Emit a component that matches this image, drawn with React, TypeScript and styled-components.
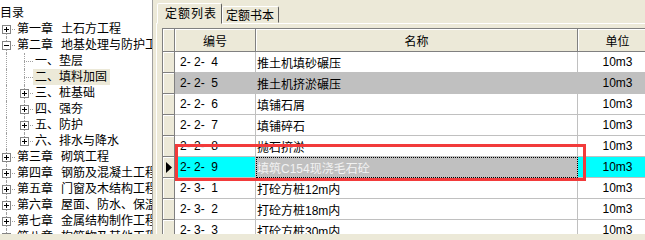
import React from 'react';
import styled, { createGlobalStyle } from 'styled-components';

const FONT = `"Liberation Sans", "Noto Sans CJK SC", sans-serif`;
const FACE = '#ece9d8';

const GlobalStyle = createGlobalStyle`
  *, *::before, *::after { box-sizing: border-box; }
  html, body { margin: 0; padding: 0; background: ${FACE}; }
  body { font-family: ${FONT}; font-size: 12px; color: #000; overflow: hidden; }
`;

const Window = styled.div`
  position: relative;
  display: flex;
  width: 645px;
  height: 234px;
  overflow: hidden;
  font-family: ${FONT};
  font-size: 12px;
`;

/* ---------------- tree ---------------- */

const TreePane = styled.div`
  flex: none;
  width: 153px;
  height: 100%;
  background: #fff;
  border-right: 1px solid #a0a0a0;
  overflow: hidden;
  padding-top: 5px;
`;

const TreeRow = styled.div`
  display: flex;
  height: 16px;
  white-space: nowrap;
`;

type Vert = 'full' | 'top' | 'bottom' | 'none';

const Connector = styled.span<{ $w: number; $x: number; $vert: Vert; $horiz: boolean }>`
  position: relative;
  flex: none;
  width: ${p => p.$w}px;
  height: 16px;
  &::before {
    content: '';
    position: absolute;
    display: ${p => (p.$vert === 'none' ? 'none' : 'block')};
    left: ${p => p.$x}px;
    top: ${p => (p.$vert === 'bottom' ? 8 : 0)}px;
    bottom: ${p => (p.$vert === 'top' ? 8 : 0)}px;
    border-left: 1px dotted #a0a0a0;
  }
  &::after {
    content: '';
    position: absolute;
    display: ${p => (p.$horiz ? 'block' : 'none')};
    left: ${p => p.$x}px;
    right: 0;
    top: 8px;
    border-top: 1px dotted #a0a0a0;
  }
`;

const ExpandBox = styled.svg<{ $x: number }>`
  position: absolute;
  left: ${p => p.$x - 4}px;
  top: 4px;
  z-index: 1;
`;

const TreeLabel = styled.span<{ $hl?: boolean; $root?: boolean }>`
  display: inline-block;
  height: 16px;
  line-height: 16px;
  padding: ${p => (p.$root ? '0' : '0 3px 0 2px')};
  background: ${p => (p.$hl ? FACE : 'transparent')};
`;

const ChapterTitle = styled.span`
  margin-left: 8px;
`;

type Box = 'plus' | 'minus' | undefined;

const BoxIcon: React.FC<{ kind: 'plus' | 'minus'; x: number }> = ({ kind, x }) => (
  <ExpandBox $x={x} width="9" height="9" viewBox="0 0 9 9">
    <rect x="0.5" y="0.5" width="8" height="8" fill="#fff" stroke="#848484" />
    <path d="M2 4.5h5" stroke="#000" strokeWidth="1" />
    {kind === 'plus' && <path d="M4.5 2v5" stroke="#000" strokeWidth="1" />}
  </ExpandBox>
);

type TreeItem =
  | { kind: 'root'; label: string }
  | { kind: 'chapter'; prefix: string; title: string; box: Box; vert: Vert }
  | { kind: 'child'; label: string; box: Box; vert: Vert; hl?: boolean };

const tree: TreeItem[] = [
  { kind: 'root', label: '目录' },
  { kind: 'chapter', prefix: '第一章', title: '土石方工程', box: 'plus', vert: 'bottom' },
  { kind: 'chapter', prefix: '第二章', title: '地基处理与防护工程', box: 'minus', vert: 'full' },
  { kind: 'child', label: '一、垫层', box: undefined, vert: 'full' },
  { kind: 'child', label: '二、填料加固', box: undefined, vert: 'full', hl: true },
  { kind: 'child', label: '三、桩基础', box: 'plus', vert: 'full' },
  { kind: 'child', label: '四、强夯', box: 'plus', vert: 'full' },
  { kind: 'child', label: '五、防护', box: 'plus', vert: 'full' },
  { kind: 'child', label: '六、排水与降水', box: 'plus', vert: 'top' },
  { kind: 'chapter', prefix: '第三章', title: '砌筑工程', box: 'plus', vert: 'full' },
  { kind: 'chapter', prefix: '第四章', title: '钢筋及混凝土工程', box: 'plus', vert: 'full' },
  { kind: 'chapter', prefix: '第五章', title: '门窗及木结构工程', box: 'plus', vert: 'full' },
  { kind: 'chapter', prefix: '第六章', title: '屋面、防水、保温及隔热工程', box: 'plus', vert: 'full' },
  { kind: 'chapter', prefix: '第七章', title: '金属结构制作工程', box: 'plus', vert: 'full' },
  { kind: 'chapter', prefix: '第八章', title: '构筑物及其他工程', box: 'plus', vert: 'full' },
];

const Tree: React.FC = () => (
  <TreePane>
    {tree.map((it, i) => {
      if (it.kind === 'root') {
        return (
          <TreeRow key={i}>
            <TreeLabel $root>{it.label}</TreeLabel>
          </TreeRow>
        );
      }
      if (it.kind === 'chapter') {
        return (
          <TreeRow key={i}>
            <Connector $w={15} $x={6} $vert={it.vert} $horiz>
              {it.box && <BoxIcon kind={it.box} x={6} />}
            </Connector>
            <TreeLabel>
              {it.prefix}
              <ChapterTitle>{it.title}</ChapterTitle>
            </TreeLabel>
          </TreeRow>
        );
      }
      return (
        <TreeRow key={i}>
          <Connector $w={15} $x={6} $vert="full" $horiz={false} />
          <Connector $w={18} $x={9} $vert={it.vert} $horiz>
            {it.box && <BoxIcon kind={it.box} x={9} />}
          </Connector>
          <TreeLabel $hl={it.hl}>{it.label}</TreeLabel>
        </TreeRow>
      );
    })}
  </TreePane>
);

/* ---------------- right side ---------------- */

const RightPane = styled.div`
  flex: 1;
  min-width: 0;
  display: flex;
  flex-direction: column;
  padding: 3px 0 0 3px;
  background: ${FACE};
  overflow: hidden;
`;

const TabBar = styled.div`
  display: flex;
  align-items: flex-end;
  height: 20px;
  padding-left: 1px;
`;

const Tab = styled.div<{ $active?: boolean }>`
  position: relative;
  z-index: ${p => (p.$active ? 1 : 0)};
  height: ${p => (p.$active ? 21 : 17)}px;
  margin-bottom: ${p => (p.$active ? -1 : 0)}px;
  width: ${p => (p.$active ? 65 : 57)}px;
  padding: ${p => (p.$active ? '2px 0 0 7px' : '1px 0 0 3px')};
  line-height: 16px;
  letter-spacing: ${p => (p.$active ? '1px' : '0')};
  background: ${FACE};
  border: 1px solid;
  border-color: #fff #606060 transparent #fff;
  border-radius: 2px 2px 0 0;
  white-space: nowrap;
`;

const TabPanel = styled.div`
  flex: 1;
  border-top: 1px solid #fff;
  border-left: 1px solid #fff;
  padding: 4px 0 0 5px;
  overflow: hidden;
`;

const Grid = styled.div`
  width: max-content;
  border-top: 1px solid #808080;
  border-left: 1px solid #808080;
`;

const HeaderRow = styled.div`
  display: flex;
  height: 23px;
`;

const HeaderCell = styled.div<{ $w: number }>`
  flex: none;
  width: ${p => p.$w}px;
  display: flex;
  align-items: center;
  justify-content: center;
  background: ${FACE};
  border-right: 1px solid #808080;
  border-bottom: 1px solid #808080;
  box-shadow: inset 1px 1px 0 #fff;
`;

const DataRow = styled.div`
  display: flex;
  height: 21px;
`;

const Indicator = styled.div`
  flex: none;
  width: 12px;
  display: flex;
  align-items: center;
  justify-content: center;
  background: ${FACE};
  border-right: 1px solid #808080;
  border-bottom: 1px solid #808080;
  box-shadow: inset 1px 1px 0 #fff;
`;

type CellTone = 'normal' | 'selected' | 'current' | 'focus';

const toneBg: Record<CellTone, string> = {
  normal: '#ffffff',
  selected: '#c0c0c0',
  current: '#00ffff',
  focus: '#c0c0c0',
};

const DataCell = styled.div<{ $w: number; $tone: CellTone; $align: 'left' | 'center'; $pad: number }>`
  flex: none;
  width: ${p => p.$w}px;
  display: flex;
  align-items: center;
  justify-content: ${p => (p.$align === 'center' ? 'center' : 'flex-start')};
  padding-left: ${p => p.$pad}px;
  white-space: pre;
  overflow: hidden;
  background: ${p => toneBg[p.$tone]};
  color: ${p => (p.$tone === 'focus' ? '#f2f2f2' : '#000')};
  border-right: 1px solid #c0c0c0;
  border-bottom: 1px solid #c0c0c0;
  outline: ${p => (p.$tone === 'focus' ? '1px dotted #000' : 'none')};
  outline-offset: -1px;
`;

const RedMark = styled.div`
  position: absolute;
  left: 175px;
  top: 144px;
  width: 411px;
  height: 37px;
  border: 3px solid #f23b3b;
  pointer-events: none;
  z-index: 5;
`;

type RowState = 'normal' | 'selected' | 'current';

const rows: { code: string; name: string; unit: string; state: RowState }[] = [
  { code: '2- 2-  4', name: '推土机填砂碾压', unit: '10m3', state: 'normal' },
  { code: '2- 2-  5', name: '推土机挤淤碾压', unit: '10m3', state: 'selected' },
  { code: '2- 2-  6', name: '填铺石屑', unit: '10m3', state: 'normal' },
  { code: '2- 2-  7', name: '填铺碎石', unit: '10m3', state: 'normal' },
  { code: '2- 2-  8', name: '抛石挤淤', unit: '10m3', state: 'normal' },
  { code: '2- 2-  9', name: '填筑C154现浇毛石砼', unit: '10m3', state: 'current' },
  { code: '2- 3-  1', name: '打砼方桩12m内', unit: '10m3', state: 'normal' },
  { code: '2- 3-  2', name: '打砼方桩18m内', unit: '10m3', state: 'normal' },
  { code: '2- 3-  3', name: '打砼方桩30m内', unit: '10m3', state: 'normal' },
];

const COLS = { code: 81, name: 322, unit: 80 };

const Pointer: React.FC = () => (
  <svg width="6" height="11" viewBox="0 0 6 11">
    <polygon points="0,0 6,5.5 0,11" fill="#000" />
  </svg>
);

const QuotaGrid: React.FC = () => (
  <Grid>
    <HeaderRow>
      <HeaderCell $w={12} />
      <HeaderCell $w={COLS.code}>编号</HeaderCell>
      <HeaderCell $w={COLS.name}>名称</HeaderCell>
      <HeaderCell $w={COLS.unit}>单位</HeaderCell>
    </HeaderRow>
    {rows.map((r, i) => {
      const base: CellTone = r.state === 'selected' ? 'selected' : r.state === 'current' ? 'current' : 'normal';
      const nameTone: CellTone = r.state === 'current' ? 'focus' : base;
      return (
        <DataRow key={i}>
          <Indicator>{r.state === 'current' && <Pointer />}</Indicator>
          <DataCell $w={COLS.code} $tone={base} $align="left" $pad={5}>
            {r.code}
          </DataCell>
          <DataCell $w={COLS.name} $tone={nameTone} $align="left" $pad={1}>
            {r.name}
          </DataCell>
          <DataCell $w={COLS.unit} $tone={base} $align="center" $pad={0}>
            {r.unit}
          </DataCell>
        </DataRow>
      );
    })}
  </Grid>
);

export default function App() {
  return (
    <>
      <GlobalStyle />
      <Window>
        <Tree />
        <RightPane>
          <TabBar>
            <Tab $active>定额列表</Tab>
            <Tab>定额书本</Tab>
          </TabBar>
          <TabPanel>
            <QuotaGrid />
          </TabPanel>
        </RightPane>
        <RedMark />
      </Window>
    </>
  );
}
